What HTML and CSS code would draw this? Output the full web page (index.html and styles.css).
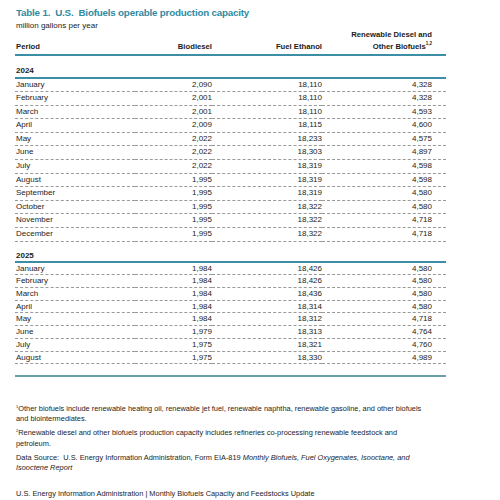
FILE: index.html
```html
<!DOCTYPE html>
<html lang="en">

<head>
  <meta charset="UTF-8" />
  <meta name="viewport" content="width=device-width, initial-scale=1.0" />
  <title>U.S. Biofuels operable production capacity</title>
  <link rel="stylesheet" href="styles.css">
</head>

<body>
  <div class="page">
    <!-- 表头 -->
    <h1 class="title">Table 1.&nbsp; U.S.&nbsp; Biofuels operable production capacity</h1>
    <p class="units">million gallons per year</p>

    <table class="capacity">
      <colgroup>
        <col class="c-period">
        <col class="c-bio">
        <col class="c-eth">
        <col class="c-rd">
      </colgroup>
      <thead>
        <tr>
          <th class="period">Period</th>
          <th>Biodiesel</th>
          <th>Fuel Ethanol</th>
          <th class="last">Renewable Diesel and<br>Other Biofuels<sup>1,2</sup></th>
        </tr>
      </thead>
      <tbody class="y2024">
        <tr class="year"><td colspan="4">2024</td></tr>
        <tr><td>January</td><td>2,090</td><td>18,110</td><td>4,328</td></tr>
        <tr><td>February</td><td>2,001</td><td>18,110</td><td>4,328</td></tr>
        <tr><td>March</td><td>2,001</td><td>18,110</td><td>4,593</td></tr>
        <tr><td>April</td><td>2,009</td><td>18,115</td><td>4,600</td></tr>
        <tr><td>May</td><td>2,022</td><td>18,233</td><td>4,575</td></tr>
        <tr><td>June</td><td>2,022</td><td>18,303</td><td>4,897</td></tr>
        <tr><td>July</td><td>2,022</td><td>18,319</td><td>4,598</td></tr>
        <tr><td>August</td><td>1,995</td><td>18,319</td><td>4,598</td></tr>
        <tr><td>September</td><td>1,995</td><td>18,319</td><td>4,580</td></tr>
        <tr><td>October</td><td>1,995</td><td>18,322</td><td>4,580</td></tr>
        <tr><td>November</td><td>1,995</td><td>18,322</td><td>4,718</td></tr>
        <tr><td>December</td><td>1,995</td><td>18,322</td><td>4,718</td></tr>
      </tbody>
      <tbody class="y2025">
        <tr class="year"><td colspan="4">2025</td></tr>
        <tr><td>January</td><td>1,984</td><td>18,426</td><td>4,580</td></tr>
        <tr><td>February</td><td>1,984</td><td>18,426</td><td>4,580</td></tr>
        <tr><td>March</td><td>1,984</td><td>18,436</td><td>4,580</td></tr>
        <tr><td>April</td><td>1,984</td><td>18,314</td><td>4,580</td></tr>
        <tr><td>May</td><td>1,984</td><td>18,312</td><td>4,718</td></tr>
        <tr><td>June</td><td>1,979</td><td>18,313</td><td>4,764</td></tr>
        <tr><td>July</td><td>1,975</td><td>18,321</td><td>4,760</td></tr>
        <tr><td>August</td><td>1,975</td><td>18,330</td><td>4,989</td></tr>
      </tbody>
    </table>
    <div class="end-rule"></div>

    <!-- 注释 -->
    <div class="notes">
      <p><sup>1</sup>Other biofuels include renewable heating oil, renewable jet fuel, renewable naphtha, renewable gasoline, and other biofuels<br>and biointermediates.</p>
      <p><sup>2</sup>Renewable diesel and other biofuels production capacity includes refineries co-processing renewable feedstock and<br>petroleum.</p>
      <p>Data Source:&nbsp; U.S. Energy Information Administration, Form EIA-819 <em>Monthly Biofuels, Fuel Oxygenates, Isooctane, and<br>Isooctene Report</em></p>
    </div>

    <p class="footer">U.S. Energy Information Administration | Monthly Biofuels Capacity and Feedstocks Update</p>
  </div>
</body>

</html>
```

FILE: styles.css
```css
* {
  margin: 0;
  padding: 0;
}

body {
  background: #fff;
  color: #1c1c1c;
  font-family: "Liberation Sans", Arial, sans-serif;
}

.page {
  padding: 6px 0 0 15px;
}

.title {
  padding-left: 1px;
  font-size: 9.8px;
  letter-spacing: -0.2px;
  line-height: 14px;
  font-weight: bold;
  color: #2f8aa2;
}

.units {
  padding-left: 1px;
  font-size: 8px;
  line-height: 11px;
}

/* 表格 */
.capacity {
  width: 431px;
  margin-top: -2.5px;
  table-layout: fixed;
  border-collapse: separate;
  border-spacing: 0;
  font-size: 8px;
}

.c-period {
  width: 120px;
}

.c-bio {
  width: 77px;
}

.c-eth {
  width: 110px;
}

.c-rd {
  width: 124px;
}

.capacity th {
  font-size: 7.7px;
  line-height: 12.5px;
  text-align: right;
  vertical-align: bottom;
  border-bottom: 2px solid #3b8ea6;
}

.capacity th.period {
  text-align: left;
  padding-left: 1px;
}

.capacity th.last,
.capacity td:last-child {
  padding-right: 14px;
}

.capacity sup {
  font-size: 4.5px;
  line-height: 0;
}

.capacity td {
  text-align: right;
  white-space: nowrap;
  border-bottom: 1px dashed #9a9a9a;
}

.capacity td:first-child {
  text-align: left;
  padding-left: 1px;
}

.y2024 td {
  line-height: 12.6px;
}

.y2025 td {
  line-height: 11.7px;
}

.capacity .year td {
  font-weight: bold;
  border-bottom: 2px solid #3b8ea6;
}

.y2024 .year td {
  padding-top: 10.5px;
  line-height: 10.5px;
}

.y2025 .year td {
  padding-top: 8px;
  line-height: 11px;
}

.end-rule {
  width: 431px;
  height: 2px;
  margin-top: 10.5px;
  background: #6a9fa5;
}

/* 注释 */
.notes {
  width: 470px;
  margin-top: 27px;
  padding-left: 1px;
  font-size: 7.4px;
  line-height: 10.5px;
  white-space: nowrap;
}

.notes p {
  margin-bottom: 3.5px;
}

.notes sup {
  font-size: 4px;
  line-height: 0;
}

.footer {
  margin-top: 15px;
  padding-left: 1px;
  font-size: 7.4px;
  line-height: 10.5px;
}
```
